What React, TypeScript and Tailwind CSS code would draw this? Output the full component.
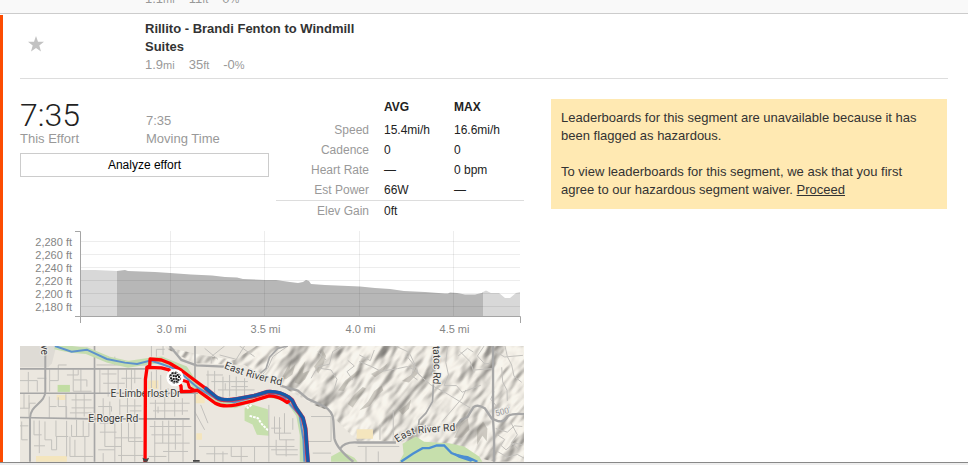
import React from "react";

type Metric = { value: string; unit: string };

const sans = "font-['Helvetica_Neue','Liberation_Sans',Arial,sans-serif]";

function Metrics({ items }: { items: Metric[] }) {
  return (
    <ul className="flex gap-[14px] text-[13px] leading-[18px] text-[#999]">
      {items.map((m) => (
        <li key={m.value + m.unit}>
          {m.value}
          <span className="text-[11px]">{m.unit}</span>
        </li>
      ))}
    </ul>
  );
}

const stats = [
  { label: "Speed", avg: "15.4", avgUnit: "mi/h", max: "16.6", maxUnit: "mi/h" },
  { label: "Cadence", avg: "0", avgUnit: "", max: "0", maxUnit: "" },
  { label: "Heart Rate", avg: "—", avgUnit: "", max: "0 bpm", maxUnit: "" },
  { label: "Est Power", avg: "66", avgUnit: "W", max: "—", maxUnit: "" },
  { label: "Elev Gain", avg: "0", avgUnit: "ft", max: "", maxUnit: "" },
];

function StatsTable() {
  return (
    <table className="h-[122px] w-[248px] shrink-0 table-fixed border-collapse text-left text-xs leading-5 text-[#222]">
      <colgroup>
        <col className="w-[108px]" />
        <col className="w-[70px]" />
        <col className="w-[70px]" />
      </colgroup>
      <thead>
        <tr className="h-[21px] align-top leading-4">
          <td className="p-0" />
          <th scope="col" className="p-0 font-bold">AVG</th>
          <th scope="col" className="p-0 font-bold">MAX</th>
        </tr>
      </thead>
      <tbody>
        {stats.map((s) => (
          <tr key={s.label} className="last:border-t last:border-[#ddd]">
            <th scope="row" className="p-0 pr-[15px] text-right font-normal text-[#999]">{s.label}</th>
            <td className="p-0">{s.avg}{s.avgUnit}</td>
            <td className="p-0">{s.max}{s.maxUnit}</td>
          </tr>
        ))}
      </tbody>
    </table>
  );
}

const elevations = [2280, 2260, 2240, 2220, 2200, 2180];
const miles = [
  { x: 150.5, label: "3.0 mi" },
  { x: 244.5, label: "3.5 mi" },
  { x: 339.5, label: "4.0 mi" },
  { x: 433.5, label: "4.5 mi" },
];

function ElevationChart() {
  return (
    <svg viewBox="0 0 504 106" className="block w-full" role="img" aria-label="Elevation profile">
      <path d="M61 39H75L97 40V85H61Z" fill="#d8d8d8" />
      <path
        d="M97 40L105 39L108 40L135 41L150 42L171 43.500L192 44.500L205 46L217 46.500L223 48L245 49L256 49L270 51L278 52L283 51L286 49L289 50L291 53L305 54L340 55.500L355 57L370 58L384 60L405 61L425 62.500H428L430 61.500L437 62L445 63.500H455L462 62L463 61V85H97Z"
        fill="#b7b7b7"
      />
      <path d="M463 61L466 59.500L471 62H479L485 67H490L496 62L500 61V85H463Z" fill="#d8d8d8" />
      <g stroke="#000" strokeOpacity=".07" strokeWidth="1">
        {elevations.map((e, i) => (
          <line key={e} x1="61" x2="500" y1={10.5 + i * 13} y2={10.5 + i * 13} />
        ))}
        {miles.map((m) => (
          <line key={m.label} x1={m.x} x2={m.x} y1="0" y2="85" />
        ))}
      </g>
      <path d="M55 .5H60.500V92M55 85.500H500.500V92" fill="none" stroke="#a5a5a5" />
      <g fontSize="11" fill="#858585" className={sans}>
        {elevations.map((e, i) => (
          <text key={e} x="52" y={15 + i * 13} textAnchor="end">{e.toLocaleString("en-US")} ft</text>
        ))}
        {miles.map((m) => (
          <text key={m.label} x={m.x + 1} y="102" textAnchor="middle">{m.label}</text>
        ))}
      </g>
    </svg>
  );
}

const checks = [
  [-13, -7], [-7, -13], [1, -13], [8, -8], [-4, -5], [3, -4], [12, -2], [-12, 2],
  [-4, 4], [4, 4], [10, 7], [-9, 9], [-2, 12], [5, 12],
];

function RouteMap() {
  return (
    <svg viewBox="15 18 1515 348" className="block w-full bg-[#ebe7df]" role="img" aria-label="Segment map">
      <defs>
        <filter id="relief" x="0" y="0" width="100%" height="100%" colorInterpolationFilters="sRGB">
          <feTurbulence type="fractalNoise" baseFrequency="0.007 0.016" numOctaves="3" seed="11" result="n" />
          <feDiffuseLighting in="n" surfaceScale="28" diffuseConstant="1.11" lightingColor="#ece9e1" result="l">
            <feDistantLight azimuth="250" elevation="64" />
          </feDiffuseLighting>
        </filter>
        <clipPath id="hills">
          <path d="M440 18L560 45L660 60L725 18H1530V366H1440L1300 330L1150 305H1030L965 240L950 215L900 195L820 150L760 110L690 75L540 70Z" />
        </clipPath>
        <path id="riverWest" d="M628 84Q700 116 830 143" />
        <path id="riverEast" d="M1150 309Q1185 283 1214 281L1340 271" />
        <path id="tatoc" d="M1254 -20L1258 60Q1260 95 1254 165" />
      </defs>

      <g clipPath="url(#hills)">
        <g transform="rotate(-52 770 190)">
          <rect x="150" y="-600" width="1240" height="1580" filter="url(#relief)" opacity=".6" />
        </g>
        <g transform="translate(525 0)" fill="#928f86" opacity=".4">
          <path d="M275 118L292 86L306 62L300 91L318 72L309 104L290 117Z" />
          <path d="M315 128L330 89L348 63L340 100L361 91L347 118L329 133Z" />
          <path d="M374 80L395 53L400 30L410 48L399 81L386 101Z" />
          <path d="M446 152L468 122L506 91L503 106L478 127L463 153Z" />
          <path d="M475 192L493 166L520 141L530 146L510 173L490 203Z" />
        </g>
        <g transform="translate(1035 0)" fill="#8e8b82" opacity=".4">
          <path d="M0 212L26 185L45 153L67 137L72 151L54 167L32 198Z" />
          <path d="M35 102L62 88L86 70L72 95L47 112Z" />
          <path d="M128 123L157 104L170 81L177 99L149 128Z" />
          <path d="M285 294L303 256L326 235L331 270L308 293Z" />
          <path d="M354 269L372 245L385 266L383 304L370 288L354 315Z" />
          <path d="M119 213L141 195L156 178L149 207L130 225Z" />
        </g>
      </g>

      {/* parks and town blocks */}
      <path d="M15 18H124L111 70L100 82H15Z" fill="#dedbd5" />
      <path d="M128 135H165V156H128Z" fill="#c2dda3" />
      <g fill="#f4e5bd">
        <path d="M400 122H431V147H400ZM63 349H156V366H63ZM540 158L570 170V190H540ZM545 280H562V300H545ZM125 165H152V180H125ZM1027 268H1076V297H1027Z" />
      </g>
      <path d="M690 206L705 192L760 208L764 288L727 285L714 254L690 243Z" fill="#c6dfac" />
      <path d="M950 350L980 334L1020 354L1030 366H950Z" fill="#c6dfac" />
      <path d="M1155 366L1168 343L1165 312L1205 290L1230 306L1305 310L1350 320L1395 350L1405 366Z" fill="#c6dfac" />
      <path d="M705 228L730 235L742 253L762 273M690 192L700 204L711 194" fill="none" stroke="#fff" strokeWidth="6" strokeDasharray="8 3" />

      {/* minor streets */}
      <g fill="none" stroke="#c3c1bd" strokeWidth="3">
        <path d="M15 122H67V155M40 96V158M67 115H94M104 88V122H130V75H155M104 122V155M175 88V154H230M198 88V155M177 120H216V140M156 105H190V90" />
        <path d="M15 205H43V190H62M27 162V205M42 165V235M103 170V235M130 172V200H155V235M153 163V235M170 180H230M183 163V235M208 163V230M103 200H125M170 204H237M165 219H230" />
        <path d="M15 258H40M20 245V300H38M57 242V285H80M73 242V340M90 245V300H110V330H125V290M123 242V290H160M155 243V350M170 255V290H222V242M185 240V290M205 242V290M165 290V350H235M180 300V350M210 290V366M57 318H90" />
        <path d="M255 88V160M280 88V170M310 88V150M260 102H305M265 130H330M335 88V155M350 88V150M320 115H380M360 88V130M245 75H400M300 75V50" />
        <path d="M265 175V230M285 185V230M315 178V225M338 170V225M360 178V230M250 200H290V215M315 198H380M345 213H380M255 250H300V366M270 240V320H320M320 240V366M341 242V305H385M360 242V366M255 277H305M300 294H380M250 330H300M310 347H385M265 340V366" />
        <path d="M410 50V18M425 50V28H450M445 18V45M410 95V150M425 90V145M438 105V150M460 145V175M400 172H455M405 190H525M422 180V235M450 175V235M480 180V230M503 175V225M415 213H520M430 200V220M405 260H530M420 243V366M444 243V310M462 242V366M482 243V330M505 240V366M410 285H500M420 310H525M445 335H520M402 350H455" />
        <path d="M580 92V150M600 93V170M625 110V175M645 105V170M665 110V170M690 115V170M575 105H625M590 125H700M610 150H720M632 130V150M650 140H700M570 170H620M558 195L580 250M540 215L570 270M553 320H840M600 320V366M625 335V366M650 320V350H700M680 320V366M575 342H640M720 320V366M763 195V366M780 230V280H830M795 232V300H840M810 220V280M770 265H800M785 300V345H850M815 300V350M835 235V270M770 330H850M890 230H950V305H880M895 340H950" />
        <path d="M1030 320H1155M1055 320V366M1092 335V366M1097 255V300M1137 210V302" />
        <path d="M590 70V50L630 18M675 18L720 50M730 120L760 85L775 50L820 18M570 25L610 58M615 45L665 58L690 18" />
        <path d="M1035 65L1070 79L1100 94L1150 86L1178 80L1202 90L1240 128M1175 45L1208 86L1212 102L1250 135L1293 158L1368 204M1300 18L1295 68L1303 105L1290 137H1327L1344 157L1400 136M1338 35L1368 65L1380 97M1382 90L1435 86M1284 245L1344 175L1355 150" />
        <path d="M1463 82L1466 126L1479 151L1480 183M1473 18L1480 50L1493 75L1500 109L1523 127M1444 35L1472 51L1527 46M1455 208L1430 178L1440 155M1445 266L1480 277L1501 258L1525 260M1450 285L1472 299L1460 316L1476 330L1500 310L1528 315M1448 334L1480 352L1510 344L1530 355M1490 247L1510 285L1493 308L1515 330" />
        <path d="M1144 18L1180 35L1188 44L1202 74L1192 107L1210 120M1035 45L1068 62L1080 30M1410 18L1390 48L1412 72L1428 70M1332 48L1360 25L1378 36M890 115L910 80L945 73L955 35L985 18M915 85L950 90L968 118L959 150M1000 61L1020 78L998 95L1015 120M935 60L911 35" />
      </g>

      {/* arterial roads */}
      <g fill="none" stroke="#a7a7a7" strokeWidth="5">
        <path d="M239 18V366M15 87H400M15 160H550M15 233L225 237H525M541 18V366" />
        <path d="M91 18V155C91 190 45 195 45 235V366" strokeWidth="6" />
        <path d="M465 18L500 60L545 76L628 80M797 137L850 152L880 177L930 200Q956 215 957 243L960 295Q966 325 1017 366M977 327Q990 305 1030 308H1145" strokeWidth="7" />
        <path d="M720 115L755 85L765 52L790 25L820 18M1258 125L1255 185L1235 220L1215 240L1211 270" />
        <path d="M1320 268L1340 240L1360 232L1378 202Q1390 192 1412 205L1433 236L1450 243Q1470 250 1482 228Q1497 220 1530 223" strokeWidth="7" />
        <path d="M1437 18V240L1440 290V366" strokeWidth="7" />
      </g>

      {/* river */}
      <path d="M120 18Q175 31 215 32L280 59L340 73L400 64L440 60L510 88L548 146L610 186L660 195L760 162L820 175L855 224L866 285V366" fill="none" stroke="#c3dcae" strokeWidth="20" />
      <path d="M120 18L170 35L216 29L276 57L330 68L367 72L407 62L440 72L485 88L550 144L613 181L660 187L759 160L810 175L855 225L867 300L870 366" fill="none" stroke="#5c91cc" strokeWidth="6" />
      <path d="M1160 366L1197 341L1225 325H1245L1268 317H1290L1312 340L1335 349L1360 352L1390 366" fill="none" stroke="#4b8ed2" strokeWidth="7" />
      <path d="M1310 338L1340 345L1380 361L1370 366L1334 354Z" fill="#4b8ed2" />

      <g className="font-[Roboto,'Liberation_Sans',sans-serif]" fontSize="31" fill="#3c3c3c" stroke="#efede8" strokeWidth="6" paintOrder="stroke" strokeLinejoin="round">
        <text x="287" y="170">E Limberlost Dr</text>
        <text x="220" y="246">E Roger Rd</text>
        <text><textPath href="#riverWest">East River Rd</textPath></text>
        <text><textPath href="#riverEast">East River Rd</textPath></text>
        <text><textPath href="#tatoc" startOffset="38">tatoc Rd</textPath></text>
        <text transform="translate(78 14) rotate(90)">ve</text>
        <text transform="translate(1446 229) rotate(-14)" fontSize="25" fill="#999">500'</text>
      </g>

      {/* ridden route and segment */}
      <g fill="none" strokeLinejoin="round" strokeLinecap="round">
        <path d="M391 366L392 118L397 82L440 84L463 90L499 138L500 155L528 154L548 151L575 170L602 190Q625 203 665 195L715 183L764 168Q795 169 818 188L828 180" stroke="#f00" strokeWidth="10" />
        <path d="M397 82L405 77L406 57L440 60L465 70L500 91L540 121L578 149" stroke="#f00" strokeWidth="10" />
        <path d="M503 121L519 126L524 142L537 150" stroke="#f00" strokeWidth="9" />
        <path d="M574 146L606 173Q625 185 666 178L719 168L759 156Q795 154 823 173L833 181L844 204L865 234L873 266L880 366" stroke="#d8334c" strokeWidth="13" />
        <path d="M574 146L606 172Q625 184 666 177L719 167L759 155Q795 153 823 172L833 181L844 202L866 235L873 266L881 366" stroke="#155aa9" strokeWidth="10" />
      </g>
      <path d="M383 354L393 358L403 354L398 366H387ZM535 361H555V366H535Z" fill="#444" />

      <g transform="translate(481 113)">
        <circle r="26" fill="#fff" />
        <circle r="17" fill="#fff" stroke="#222" strokeWidth="2" strokeDasharray="8 5" />
        {checks.map(([x, y]) => (
          <rect key={`${x},${y}`} x={x - 3} y={y - 3} width="6" height="6" fill="#222" />
        ))}
      </g>
    </svg>
  );
}

export default function App() {
  return (
    <div className={`w-full bg-white text-[#333] ${sans}`}>
      <div className="flex h-[14px] items-end overflow-hidden border-b border-[#ccc] bg-[#f9f9f9] pb-[5px] pl-[145px]">
        <Metrics items={[{ value: "1.1", unit: "mi" }, { value: "11", unit: "ft" }, { value: "0", unit: "%" }]} />
      </div>

      <main className="mt-px border-l-[3px] border-[#fc4c02] pr-5 pl-[17px]">
        <header className="flex border-b border-[#ddd] pt-[5px] pb-1">
          <button type="button" aria-label="Star segment" className="mt-4 ml-2 h-4 w-4 text-[#c2c2c2]">
            <svg viewBox="0 0 16 16" fill="currentColor">
              <path d="M8 0L10 5.700L16 5.800L11.300 9.500L13 15.600L8 12.100L3 15.600L4.700 9.500L0 5.800L6 5.700Z" />
            </svg>
          </button>
          <div className="ml-[101px] w-[220px]">
            <h1 className="text-[13px] leading-[18px] font-bold">Rillito - Brandi Fenton to Windmill Suites</h1>
            <Metrics items={[{ value: "1.9", unit: "mi" }, { value: "35", unit: "ft" }, { value: "-0", unit: "%" }]} />
          </div>
        </header>

        <div className="grid grid-cols-[504fr_396fr] items-start gap-[27px] pt-5 pr-px">
          <section>
            <div className="flex h-[132px] items-start gap-[7px]">
              <div className="flex-1">
                <dl className="grid grid-cols-[126px_1fr] items-end text-[13px] text-[#999]">
                  <div className="flex flex-col-reverse">
                    <dt className="leading-4">This Effort</dt>
                    <dd className="font-[Roboto,'Liberation_Sans',sans-serif] text-[32px] leading-8 font-light text-[#222]">7:35</dd>
                  </div>
                  <div className="flex flex-col-reverse">
                    <dt className="leading-4">Moving Time</dt>
                    <dd className="leading-5">7:35</dd>
                  </div>
                </dl>
                <button type="button" className="mt-1.5 block h-6 w-full border border-[#ccc] bg-white text-xs text-black">
                  Analyze effort
                </button>
              </div>
              <StatsTable />
            </div>
            <ElevationChart />
            <div className="mt-[9px]">
              <RouteMap />
            </div>
          </section>

          <aside className="space-y-[18px] bg-[#ffe9b2] p-2.5 text-[13px] leading-[18px]">
            <p>Leaderboards for this segment are unavailable because it has been flagged as hazardous.</p>
            <p>
              To view leaderboards for this segment, we ask that you first agree to our hazardous segment waiver.{" "}
              <a href="#waiver" className="underline">Proceed</a>
            </p>
          </aside>
        </div>
      </main>
      <footer className="h-[3px] border-t border-[#888] bg-[#eee]" />
    </div>
  );
}
